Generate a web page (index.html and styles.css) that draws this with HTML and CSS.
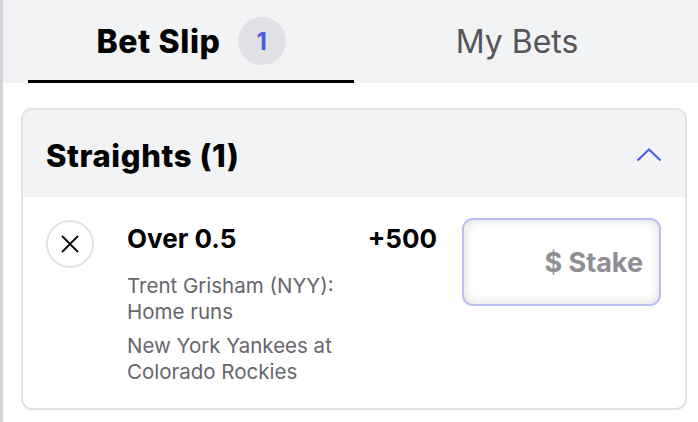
FILE: index.html
```html
<!DOCTYPE html>
<html lang="en">
<head>
    <meta charset="UTF-8">
    <meta name="viewport" content="width=device-width, initial-scale=1.0">
    <title>Bet Slip</title>
    <link rel="stylesheet" href="styles.css">
</head>
<body>
    <!-- Tabs -->
    <div class="tabs">
        <div class="tab active">
            <span class="tab-label">Bet Slip</span>
            <span class="tab-badge">1</span>
        </div>
        <div class="tab">
            <span class="tab-label">My Bets</span>
        </div>
    </div>

    <!-- Straights card -->
    <div class="card">
        <div class="card-header">
            <h2>Straights (1)</h2>
            <svg class="chevron" width="26" height="14" viewBox="0 0 26 14">
                <path d="M1.5 12.5 L13 1.5 L24.5 12.5" fill="none" stroke="#4a5ce6" stroke-width="2"/>
            </svg>
        </div>
        <div class="bet-row">
            <button class="remove-btn" aria-label="Remove">
                <svg width="20" height="20" viewBox="0 0 20 20">
                    <path d="M2 2 L18 18 M18 2 L2 18" stroke="#111" stroke-width="1.9" fill="none"/>
                </svg>
            </button>
            <div class="bet-details">
                <div class="bet-pick">Over 0.5</div>
                <p class="bet-market">Trent Grisham (NYY): Home runs</p>
                <p class="bet-event">New York Yankees at Colorado Rockies</p>
            </div>
            <div class="bet-odds">+500</div>
            <div class="stake">$ Stake</div>
        </div>
    </div>
</body>
</html>
```

FILE: styles.css
```css
* {
    margin: 0;
    padding: 0;
    box-sizing: border-box;
}

body {
    font-family: Inter, 'Liberation Sans', sans-serif;
    background: #fff;
    border-left: 3px solid #d3d4d9;
    min-height: 100vh;
    color: #000;
}

/* Tabs */
.tabs {
    display: flex;
    background: #f2f3f5;
    padding: 0 18px 0 25px;
}

.tab {
    flex: 1;
    height: 83px;
    display: flex;
    align-items: center;
    justify-content: center;
    gap: 17px;
    border-bottom: 3px solid transparent;
    padding-top: 2px;
}

.tab.active {
    border-bottom-color: #000;
}

.tab-label {
    font-size: 32px;
    color: #555558;
}

.tab.active .tab-label {
    font-weight: 800;
    color: #000;
    letter-spacing: 0.6px;
}

.tab-badge {
    width: 48px;
    height: 48px;
    border-radius: 50%;
    background: #e1e2e6;
    color: #4a5ce6;
    font-size: 24px;
    font-weight: 700;
    display: flex;
    align-items: center;
    justify-content: center;
}

/* Card */
.card {
    margin: 25px 11px 0 18px;
    border: 2px solid #e1e2e6;
    border-radius: 11px;
    overflow: hidden;
}

.card-header {
    background: #f2f3f5;
    height: 87px;
    display: flex;
    align-items: center;
    justify-content: space-between;
    padding: 0 23px 0 23px;
}

.card-header h2 {
    font-size: 31px;
    font-weight: 800;
    letter-spacing: 0.6px;
    padding-top: 4px;
}

.chevron {
    margin-top: 2px;
}

.bet-row {
    display: flex;
    align-items: flex-start;
    padding: 23px 24px 24px 23px;
}

.remove-btn {
    width: 48px;
    height: 48px;
    flex-shrink: 0;
    border-radius: 50%;
    border: 2px solid #e1e2e6;
    background: #fff;
    display: flex;
    align-items: center;
    justify-content: center;
}

.bet-details {
    flex: 1;
    margin-left: 33px;
    padding-top: 3px;
}

.bet-pick {
    font-size: 26px;
    font-weight: 700;
    margin-bottom: 19px;
}

.bet-market,
.bet-event {
    font-size: 20.5px;
    line-height: 25.5px;
    color: #66666c;
    max-width: 230px;
}

.bet-market {
    margin-bottom: 9px;
}

.bet-odds {
    font-size: 26px;
    font-weight: 700;
    padding-top: 3px;
    margin-right: 25px;
}

.stake {
    width: 199px;
    height: 88px;
    margin-top: -2px;
    border: 2px solid #b8bef4;
    border-radius: 11px;
    box-shadow: inset 0 0 12px rgba(0, 0, 0, 0.14);
    display: flex;
    align-items: center;
    justify-content: flex-end;
    padding-right: 16px;
    font-size: 27px;
    font-weight: 700;
    color: #8e8e94;
}
```
